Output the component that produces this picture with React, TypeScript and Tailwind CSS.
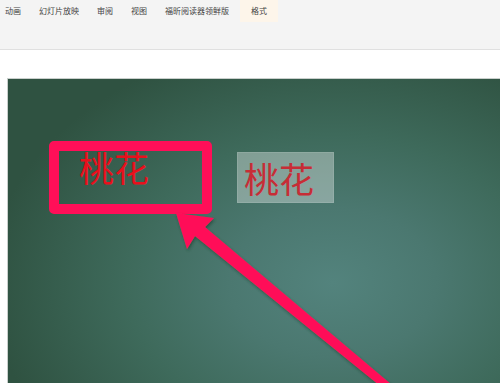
import React from 'react';

const tabs = ['动画', '幻灯片放映', '审阅', '视图', '福昕阅读器领鲜版'];

const cjk = { fontFamily: '"Noto Sans CJK SC", "Noto Sans", sans-serif' };

const App: React.FC = () => {
  return (
    <div className="w-[500px] h-[383px] overflow-hidden bg-white" style={cjk}>
      {/* ribbon tabs */}
      <div className="h-[50px] bg-[#f4f4f4] border-b border-[#e0e0e0]">
        <div className="flex items-start gap-[18px] h-[20px] pl-[5px] text-[8px] text-[#444]">
          {tabs.map((t) => (
            <span key={t} className="leading-[22px]">{t}</span>
          ))}
          <span className="leading-[22px] bg-[#fdf5ea] px-[11px] -ml-[7px]">格式</span>
        </div>
      </div>

      {/* slide area */}
      <div className="pt-[28px] pl-[7px]">
        <div
          className="relative w-[493px] h-[310px] border-l border-t border-[#c9cfcc]"
          style={{
            background:
              'radial-gradient(ellipse 70% 80% at 66% 66%, #53837d 0%, #4b7870 30%, #3e6a5b 60%, #2f5241 100%)',
          }}
        >
          {/* red outline box */}
          <div className="absolute left-[41px] top-[62px] w-[163px] h-[73px] border-[10px] border-[#ff0f58] rounded-[5px]" />
          <div className="absolute left-[71px] top-[66px] text-[35px] leading-[44px] text-[#e8101c]">桃花</div>

          {/* grey text box */}
          <div className="absolute left-[229px] top-[73px] w-[97px] h-[51px] bg-white/35 border border-white/10 pl-[6px] text-[35px] leading-[50px] text-[#c72d36]">
            桃花
          </div>

          {/* arrow */}
          <svg className="absolute left-0 top-0" width="493" height="310" viewBox="0 0 493 310">
            <defs>
              <filter id="sh" x="-10%" y="-10%" width="130%" height="130%">
                <feDropShadow dx="1" dy="2" stdDeviation="1.5" floodColor="#1d3a2c" floodOpacity="0.6" />
              </filter>
            </defs>
            <polygon
              filter="url(#sh)"
              fill="#ff0f58"
              points="168,134 206,139 197,148 384,306 371,306 187,157 179,170"
            />
          </svg>
        </div>
      </div>
    </div>
  );
};

export default App;
